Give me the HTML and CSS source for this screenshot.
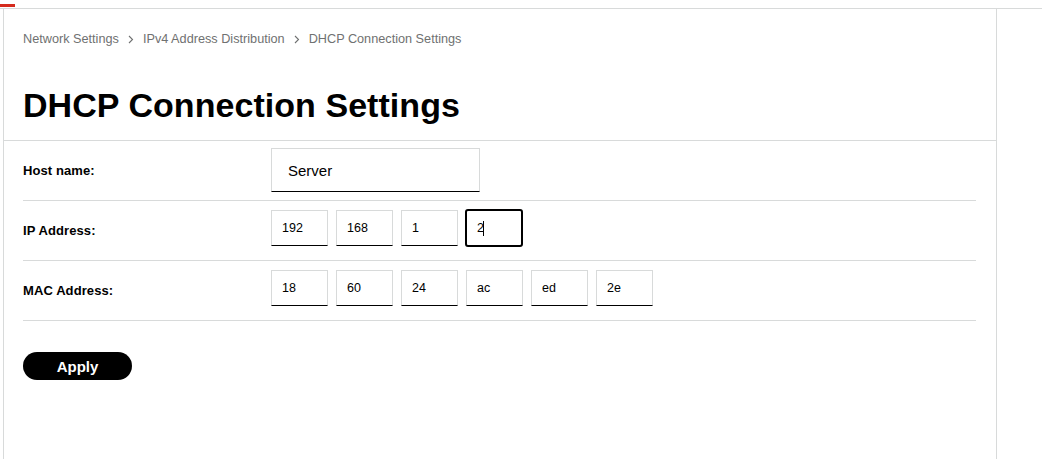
FILE: index.html
```html
<!DOCTYPE html>
<html lang="en">
<head>
<meta charset="utf-8">
<title>DHCP Connection Settings</title>
<link rel="stylesheet" href="styles.css">
</head>
<body>
<div class="topbar"><span class="accent"></span></div>
<div class="layout">
  <main class="panel">
    <header class="page-head">
      <nav class="crumbs">
        <span class="crumb">Network Settings</span>
        <svg class="chev" width="6" height="9" viewBox="0 0 6 9"><path d="M1 1l3.5 3.5L1 8" fill="none" stroke="#6f7171" stroke-width="1.1"/></svg>
        <span class="crumb">IPv4 Address Distribution</span>
        <svg class="chev" width="6" height="9" viewBox="0 0 6 9"><path d="M1 1l3.5 3.5L1 8" fill="none" stroke="#6f7171" stroke-width="1.1"/></svg>
        <span class="crumb">DHCP Connection Settings</span>
      </nav>
      <h1 class="title">DHCP Connection Settings</h1>
    </header>
    <section class="form">
      <div class="row row-host">
        <label class="label">Host name:</label>
        <div class="fields fields-host">
          <input class="input input-wide" type="text" value="Server">
        </div>
      </div>
      <div class="row">
        <label class="label">IP Address:</label>
        <div class="fields">
          <input class="input input-small" type="text" value="192">
          <input class="input input-small" type="text" value="168">
          <input class="input input-small" type="text" value="1">
          <span class="focus-wrap"><input class="input input-small input-focused" type="text" value="2"></span>
        </div>
      </div>
      <div class="row">
        <label class="label">MAC Address:</label>
        <div class="fields">
          <input class="input input-small" type="text" value="18">
          <input class="input input-small" type="text" value="60">
          <input class="input input-small" type="text" value="24">
          <input class="input input-small" type="text" value="ac">
          <input class="input input-small" type="text" value="ed">
          <input class="input input-small" type="text" value="2e">
        </div>
      </div>
      <button class="apply" type="button">Apply</button>
    </section>
  </main>
</div>
</body>
</html>
```
FILE: styles.css
```css
html, body {
  margin: 0;
  padding: 0;
  background: #ffffff;
}
body {
  font-family: "Liberation Sans", Arial, sans-serif;
  color: #000000;
}
.topbar {
  height: 8px;
  border-bottom: 1px solid #d8dada;
  display: flex;
  align-items: flex-start;
}
.accent {
  display: block;
  width: 15px;
  height: 3px;
  margin-top: 4px;
  background: #d52b1e;
}
.layout {
  display: flex;
  padding-left: 3px;
}
.panel {
  width: 992px;
  min-height: calc(100vh - 9px);
  border-left: 1px solid #d8dada;
  border-right: 1px solid #d8dada;
  box-sizing: content-box;
}
.page-head {
  padding: 22px 19px 15px;
  border-bottom: 1px solid #d8dada;
}
.crumbs {
  display: flex;
  align-items: center;
  height: 16px;
  font-size: 12.7px;
  line-height: 16px;
  color: #6f7171;
}
.chev {
  margin: 1px 9px 0 9px;
}
.title {
  margin: 38px 0 0;
  font-size: 34px;
  line-height: 40px;
  font-weight: 700;
  letter-spacing: 0.05px;
  color: #000;
}
.form {
  padding: 0 20px 0 19px;
}
.row {
  display: flex;
  align-items: center;
  height: 59px;
  border-bottom: 1px solid #d8dada;
}
.label {
  width: 248px;
  flex: none;
  font-size: 13px;
  font-weight: 700;
  letter-spacing: 0.1px;
}
.fields {
  display: flex;
  gap: 8px;
  align-self: flex-start;
  padding-top: 9px;
}
.fields-host {
  padding-top: 7px;
}
.input {
  box-sizing: border-box;
  margin: 0;
  border: 1px solid #d8dada;
  border-bottom: 1px solid #000;
  border-radius: 0;
  background: #fff;
  font-family: "Liberation Sans", Arial, sans-serif;
  color: #000;
  outline: none;
}
.input-wide {
  width: 209px;
  height: 44px;
  padding: 0 16px;
  font-size: 15px;
}
.input-small {
  width: 57px;
  height: 36px;
  padding: 0 10px;
  font-size: 12.5px;
}
.focus-wrap {
  position: relative;
  display: block;
}
.input-focused {
  border: 2px solid #000;
  border-radius: 3px;
  margin: -1px;
  width: 58px;
  height: 38px;
}
.focus-wrap::after {
  content: "";
  position: absolute;
  left: 17px;
  top: 11px;
  width: 1px;
  height: 15px;
  background: #000;
}
.apply {
  display: block;
  margin-top: 31px;
  width: 109px;
  height: 28px;
  border: none;
  border-radius: 14px;
  background: #000;
  color: #fff;
  font-family: "Liberation Sans", Arial, sans-serif;
  font-size: 15px;
  font-weight: 700;
  padding: 0;
}
```
